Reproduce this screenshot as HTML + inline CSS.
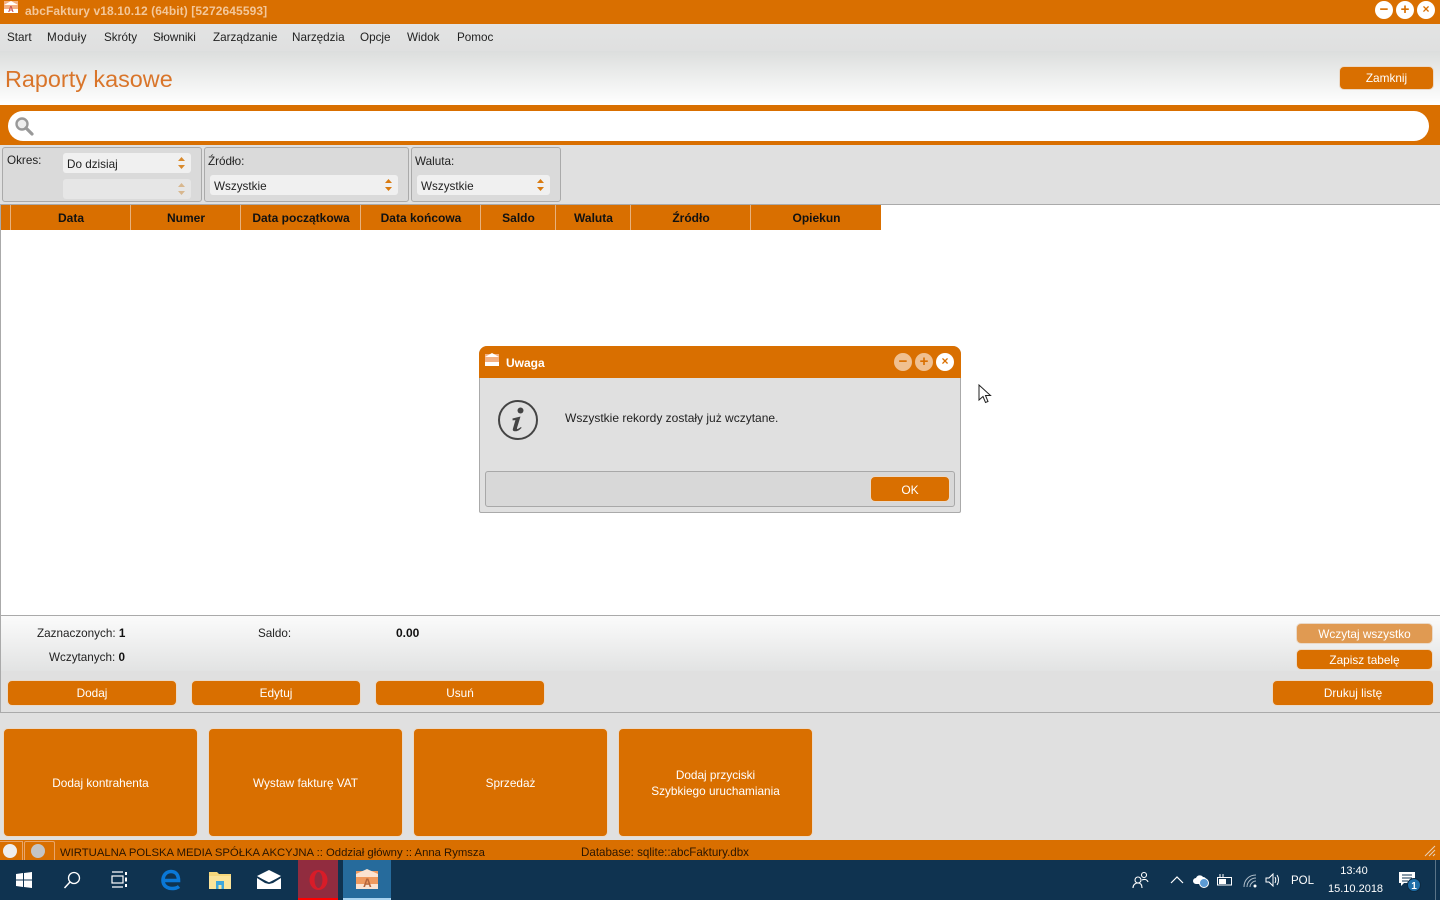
<!DOCTYPE html>
<html lang="pl"><head><meta charset="utf-8"><title>abcFaktury</title>
<style>
*{box-sizing:border-box;margin:0;padding:0}
html,body{width:1440px;height:900px;overflow:hidden;background:#e0e0e0;font-family:"Liberation Sans",sans-serif;font-size:11.7px;color:#222}
.a{position:absolute;white-space:nowrap}
.btn{position:absolute;background:#d96f00;color:#fff;border-radius:5px;border:1px solid #ead9c8;text-align:center;font-size:11.8px;display:flex;align-items:center;justify-content:center;line-height:16px}
.tb{position:absolute;top:0;width:1440px;height:24px;background:#d96f00}
.wc{position:absolute;border-radius:50%;background:#fff;color:#d96f00;text-align:center;font-weight:bold}
.panel{position:absolute;background:#dadada;border:1px solid #aaa;border-radius:3px}
.sel{position:absolute;background:#f0f0f0;border-radius:3px;font-size:11.7px;padding:4px 4px;height:20px;line-height:15px;color:#222}
.ar{position:absolute;right:6px;top:4px;width:7px;height:12px}
.th{position:absolute;top:205px;height:25px;background:#d96f00;border-right:1px solid #e8b27d;font-weight:bold;color:#111;text-align:center;line-height:26px;font-size:12px;padding-left:1px}
</style></head><body>
<div class="tb"></div>
<svg class="a" style="left:3px;top:0" width="16" height="14" viewBox="0 0 16 14"><rect x="1" y="1" width="14" height="12" fill="#f4b183"/><path d="M1 5L8 1l7 4" fill="#fff"/><path d="M1 9h14v4H1z" fill="#fff"/><text x="5" y="12" font-size="8" font-weight="bold" fill="#c55">A</text></svg>
<div class="a" style="left:25px;top:3px;font-weight:bold;color:#f3c79a;font-size:12px;line-height:16px;letter-spacing:.1px">abcFaktury v18.10.12 (64bit) [5272645593]</div>
<div class="wc" style="left:1375px;top:1px;width:18px;height:18px;line-height:17px;font-size:15px">−</div>
<div class="wc" style="left:1396px;top:1px;width:18px;height:18px;line-height:17px;font-size:15px">+</div>
<div class="wc" style="left:1417px;top:1px;width:18px;height:18px;line-height:17px;font-size:12px">×</div>

<div class="a" style="left:0;top:24px;width:1440px;height:27px;background:linear-gradient(#e3e3e3,#dfe0e0)"></div>
<div class="a" style="left:7px;top:30px;line-height:16px">Start</div>
<div class="a" style="left:47px;top:30px;line-height:16px;letter-spacing:.35px">Moduły</div>
<div class="a" style="left:104px;top:30px;line-height:16px">Skróty</div>
<div class="a" style="left:153px;top:30px;line-height:16px">Słowniki</div>
<div class="a" style="left:213px;top:30px;line-height:16px">Zarządzanie</div>
<div class="a" style="left:292px;top:30px;line-height:16px">Narzędzia</div>
<div class="a" style="left:360px;top:30px;line-height:16px">Opcje</div>
<div class="a" style="left:407px;top:30px;line-height:16px">Widok</div>
<div class="a" style="left:457px;top:30px;line-height:16px">Pomoc</div>

<div class="a" style="left:0;top:51px;width:1440px;height:54px;background:linear-gradient(#dcdedd,#fff)"></div>
<div class="a" style="left:5px;top:65px;font-size:23.4px;line-height:28px;color:#d9752a">Raporty kasowe</div>
<div class="btn" style="left:1339px;top:66px;width:95px;height:24px">Zamknij</div>

<div class="a" style="left:0;top:105px;width:1440px;height:40px;background:#d96f00"></div>
<div class="a" style="left:8px;top:111px;width:1421px;height:30px;background:#fff;border-radius:15px"></div>
<svg class="a" style="left:14px;top:116px" width="20" height="20" viewBox="0 0 20 20"><circle cx="8" cy="8" r="5.500" fill="#eee" stroke="#999" stroke-width="2.400"/><path d="M12 12l6 6" stroke="#999" stroke-width="3.200" stroke-linecap="round"/></svg>

<div class="a" style="left:0;top:145px;width:1440px;height:60px;background:#e0e0e0;border-bottom:1px solid #aaa"></div>
<div class="panel" style="left:2px;top:147px;width:200px;height:55px"></div>
<div class="a" style="left:7px;top:153px;line-height:16px">Okres:</div>
<div class="sel" style="left:63px;top:153px;width:128px">Do dzisiaj<svg class="ar" viewBox="0 0 7 12"><path d="M3.500 0L7 4H0zM0 8h7l-3.500 4z" fill="#d98a2c"/></svg></div>
<div class="sel" style="left:63px;top:179px;width:128px;background:#e6e6e6"><svg class="ar" viewBox="0 0 7 12"><path d="M3.500 0L7 4H0zM0 8h7l-3.500 4z" fill="#d8b78e"/></svg></div>
<div class="panel" style="left:204px;top:147px;width:205px;height:55px"></div>
<div class="a" style="left:208px;top:154px;line-height:16px">Źródło:</div>
<div class="sel" style="left:210px;top:175px;width:188px">Wszystkie<svg class="ar" viewBox="0 0 7 12"><path d="M3.500 0L7 4H0zM0 8h7l-3.500 4z" fill="#d97a10"/></svg></div>
<div class="panel" style="left:411px;top:147px;width:150px;height:55px"></div>
<div class="a" style="left:415px;top:154px;line-height:16px">Waluta:</div>
<div class="sel" style="left:417px;top:175px;width:133px">Wszystkie<svg class="ar" viewBox="0 0 7 12"><path d="M3.500 0L7 4H0zM0 8h7l-3.500 4z" fill="#d97a10"/></svg></div>

<div class="a" style="left:0;top:205px;width:1440px;height:411px;background:#fff;border-left:1px solid #aaa;border-bottom:1px solid #aaa"></div>
<div class="th" style="left:1px;width:10px"></div>
<div class="th" style="left:11px;width:120px">Data</div>
<div class="th" style="left:131px;width:110px">Numer</div>
<div class="th" style="left:241px;width:120px">Data początkowa</div>
<div class="th" style="left:361px;width:120px">Data końcowa</div>
<div class="th" style="left:481px;width:75px">Saldo</div>
<div class="th" style="left:556px;width:75px">Waluta</div>
<div class="th" style="left:631px;width:120px">Źródło</div>
<div class="th" style="left:751px;width:130px;border-right:0">Opiekun</div>

<div class="a" style="left:0;top:616px;width:1440px;height:55px;background:linear-gradient(#fbfbfb,#e2e3e3)"></div>
<div class="a" style="left:0;top:671px;width:1440px;height:42px;background:#e0e0e0;border-bottom:1px solid #aaa"></div>
<div class="a" style="left:0;top:616px;width:1px;height:97px;background:#aaa"></div>
<div class="a" style="left:37px;top:626px;line-height:16px">Zaznaczonych: <b style="color:#111">1</b></div>
<div class="a" style="left:49px;top:650px;line-height:16px">Wczytanych: <b style="color:#111">0</b></div>
<div class="a" style="left:258px;top:626px;line-height:16px">Saldo:</div>
<div class="a" style="left:396px;top:625px;line-height:16px;font-weight:bold;font-size:12px;color:#111">0.00</div>
<div class="btn" style="left:1296px;top:623px;width:137px;height:21px;background:#e09a52;color:#fff">Wczytaj wszystko</div>
<div class="btn" style="left:1296px;top:649px;width:137px;height:21px">Zapisz tabelę</div>
<div class="btn" style="left:7px;top:680px;width:170px;height:26px">Dodaj</div>
<div class="btn" style="left:191px;top:680px;width:170px;height:26px">Edytuj</div>
<div class="btn" style="left:375px;top:680px;width:170px;height:26px">Usuń</div>
<div class="btn" style="left:1272px;top:680px;width:162px;height:26px">Drukuj listę</div>

<div class="btn" style="left:3px;top:728px;width:195px;height:109px">Dodaj kontrahenta</div>
<div class="btn" style="left:208px;top:728px;width:195px;height:109px">Wystaw fakturę VAT</div>
<div class="btn" style="left:413px;top:728px;width:195px;height:109px">Sprzedaż</div>
<div class="btn" style="left:618px;top:728px;width:195px;height:109px">Dodaj przyciski<br>Szybkiego uruchamiania</div>

<div class="a" style="left:0;top:840px;width:1440px;height:20px;background:#d96f00"></div>
<div class="a" style="left:0;top:841px;width:23px;height:19px;border-right:1px solid #e8a56a;border-top:1px solid #e8a56a"></div>
<div class="a" style="left:24px;top:841px;width:31px;height:19px;border-right:1px solid #e8a56a;border-top:1px solid #e8a56a;border-left:1px solid #e8a56a;border-radius:2px 2px 0 0"></div>
<div class="a" style="left:3px;top:844px;width:14px;height:14px;border-radius:50%;background:#eee"></div>
<div class="a" style="left:31px;top:844px;width:14px;height:14px;border-radius:50%;background:#c4c4c4"></div>
<div class="a" style="left:60px;top:845px;line-height:16px;font-size:11.3px;color:#2a1500">WIRTUALNA POLSKA MEDIA SPÓŁKA AKCYJNA :: Oddział główny :: Anna Rymsza</div>
<div class="a" style="left:581px;top:845px;line-height:16px;font-size:11.6px;color:#2a1500">Database: sqlite::abcFaktury.dbx</div>
<svg class="a" style="left:1424px;top:845px" width="12" height="12"><path d="M1 11L11 1M5 11l6-6M9 11l2-2" stroke="#e8d3bd"/></svg>

<div class="a" style="left:479px;top:346px;width:482px;height:167px;background:#e0e0e0;border:1px solid #aaa;border-top:0;border-radius:8px 8px 2px 2px"></div>
<div class="a" style="left:479px;top:346px;width:482px;height:32px;background:#d96f00;border-radius:8px 8px 0 0"></div>
<svg class="a" style="left:484px;top:352px" width="16" height="15" viewBox="0 0 16 15"><rect x="1" y="2" width="14" height="12" fill="#f4b183"/><path d="M1 5l7-4 7 4" fill="#fff"/><path d="M1 10h14v4H1z" fill="#fff"/></svg>
<div class="a" style="left:506px;top:355px;font-weight:bold;font-size:12px;color:#fff;line-height:16px">Uwaga</div>
<div class="wc" style="left:894px;top:353px;width:18px;height:18px;background:#f0c090;line-height:17px;font-size:15px">−</div>
<div class="wc" style="left:915px;top:353px;width:18px;height:18px;background:#f0c090;line-height:17px;font-size:15px">+</div>
<div class="wc" style="left:936px;top:353px;width:18px;height:18px;line-height:17px;font-size:12px">×</div>
<svg class="a" style="left:497px;top:399px" width="42" height="42" viewBox="0 0 42 42"><circle cx="21" cy="21" r="19" fill="none" stroke="#444" stroke-width="2"/><circle cx="23.500" cy="11.500" r="3" fill="#444"/><path d="M15.500 19.500l8-2-3.500 11.500c-.3 1 .4 1.300 1.200.8l2.800-1.800.6.9c-2.300 2.300-4 3.400-6.300 3.400-2.200 0-2.800-1-2.400-2.500l2.500-8.700-2.800.3z" fill="#444"/></svg>
<div class="a" style="left:565px;top:410px;line-height:16px;font-size:12px;color:#222">Wszystkie rekordy zostały już wczytane.</div>
<div class="a" style="left:485px;top:471px;width:470px;height:36px;background:#d8d8d8;border:1px solid #a8a8a8;border-radius:3px"></div>
<div class="btn" style="left:870px;top:476px;width:80px;height:26px;font-size:12px;padding-top:1px">OK</div>
<svg class="a" style="left:977px;top:383px" width="15" height="22" viewBox="0 0 15 22"><path d="M2 2v15l4-3.500 2.500 6 2.500-1-2.500-6h5z" fill="#fff" stroke="#222" stroke-width="1"/></svg>

<div class="a" style="left:0;top:860px;width:1440px;height:40px;background:#0f3350"></div>
<svg class="a" style="left:15px;top:871px" width="18" height="18" viewBox="0 0 18 18"><path d="M1 3l7-1v6.500H1zM9 2l8-1v7.500H9zM1 9.500h7V16l-7-1zM9 9.500h8V17l-8-1z" fill="#fff"/></svg>
<svg class="a" style="left:63px;top:871px" width="18" height="18" viewBox="0 0 18 18"><circle cx="11" cy="7" r="5.500" fill="none" stroke="#fff" stroke-width="1.300"/><path d="M7 11l-5.500 6" stroke="#fff" stroke-width="1.500"/></svg>
<svg class="a" style="left:111px;top:871px" width="18" height="18" viewBox="0 0 18 18" fill="none" stroke="#fff" stroke-width="1.200"><path d="M1 1h11M1 16h11"/><rect x="1" y="5" width="11" height="7"/><path d="M15 1v3M15 6.500v4M15 13v3" stroke-width="2"/></svg>
<svg class="a" style="left:161px;top:869px" width="21" height="22" viewBox="0 0 21 22"><path d="M3 11.500h14.500C17.500 6 15 2.500 10 2.500S2 6.500 2 11.500 6 19.500 11 19.500c3 0 5.500-.8 7-2" fill="none" stroke="#0a78d7" stroke-width="3.600"/></svg>
<svg class="a" style="left:209px;top:870px" width="22" height="20" viewBox="0 0 22 20"><path d="M0 2h8l2 2h12v15H0z" fill="#f6d87c"/><rect x="0" y="6" width="22" height="13" fill="#fbe49a"/><rect x="7" y="11" width="8" height="8" fill="#3fa7dc"/><rect x="9.500" y="15" width="3" height="4" fill="#fbe49a"/></svg>
<svg class="a" style="left:257px;top:870px" width="24" height="19" viewBox="0 0 24 19"><path d="M0 6L12 0l12 6-12 7z" fill="#fff"/><path d="M0 8l8 5 4 1 4-1 8-5v11H0z" fill="#fff"/><path d="M0 7l12 6 12-6" fill="none" stroke="#0f3350" stroke-width="1"/></svg>
<div class="a" style="left:298px;top:860px;width:40px;height:40px;background:#912c3f;border-bottom:2px solid #f00"></div>
<svg class="a" style="left:306px;top:868px" width="24" height="24" viewBox="0 0 24 24"><ellipse cx="12.500" cy="12" rx="9" ry="10" fill="#d81c28"/><ellipse cx="12.500" cy="12" rx="4" ry="8" fill="#912c3f"/></svg>
<div class="a" style="left:343px;top:860px;width:48px;height:40px;background:#266b9c;border-bottom:2px solid #a9d3ef"></div>
<svg class="a" style="left:355px;top:868px" width="24" height="22" viewBox="0 0 24 22"><rect x="1" y="3" width="22" height="18" fill="#ef9a5f"/><path d="M1 6l11-5 11 5v3H1z" fill="#fbe3d1"/><path d="M1 16h22v5H1z" fill="#fbe3d1"/><text x="8" y="19" font-size="12" font-weight="bold" fill="#b5653b" font-family="Liberation Sans">A</text></svg>

<svg class="a" style="left:1132px;top:871px" width="18" height="18" viewBox="0 0 18 18" fill="none" stroke="#fff" stroke-width="1.100"><circle cx="6" cy="9" r="3"/><path d="M1 17c0-3 2-5 5-5s4 2 4 5"/><circle cx="12" cy="4" r="2.500"/><path d="M10 9c2-1 5-1 6 2"/></svg>
<svg class="a" style="left:1170px;top:875px" width="14" height="9"><path d="M1 8l6-6 6 6" fill="none" stroke="#fff" stroke-width="1.200"/></svg>
<svg class="a" style="left:1193px;top:873px" width="17" height="15" viewBox="0 0 17 15"><path d="M3 11a3 3 0 010-6 4 4 0 017-1 3 3 0 013 4v3z" fill="#fff"/><circle cx="11" cy="10" r="4.500" fill="#5b9bd5" stroke="#fff"/></svg>
<svg class="a" style="left:1217px;top:874px" width="16" height="12" viewBox="0 0 16 12" fill="none" stroke="#fff"><rect x=".5" y="3.500" width="14" height="7.500"/><rect x="2" y="5" width="7" height="5" fill="#fff" stroke="none"/><path d="M3 0v3M6 0v3"/></svg>
<svg class="a" style="left:1243px;top:874px" width="14" height="14" viewBox="0 0 14 14" fill="none" stroke="#aebdc9"><path d="M1 13C1 6 6 1 13 1M4 13c0-5 4-9 9-9M7 13c0-3 3-6 6-6"/><circle cx="12" cy="12" r="1.500" fill="#fff" stroke="none"/></svg>
<svg class="a" style="left:1265px;top:873px" width="16" height="14" viewBox="0 0 16 14" fill="none" stroke="#fff"><path d="M1 5h3l4-4v12L4 9H1z"/><path d="M10 4c1 2 1 4 0 6M12 2c2 3 2 7 0 10"/></svg>
<div class="a" style="left:1291px;top:873px;color:#fff;font-size:11.5px;line-height:16px">POL</div>
<div class="a" style="left:1328px;top:863px;width:52px;text-align:center;color:#fff;font-size:11px;line-height:16px">13:40</div>
<div class="a" style="left:1328px;top:881px;width:52px;text-align:center;color:#fff;font-size:11px;line-height:16px">15.10.2018</div>
<svg class="a" style="left:1399px;top:872px" width="24" height="20" viewBox="0 0 24 20"><path d="M0 0h16v11H5l-3 3v-3H0z" fill="#fff"/><path d="M3 3h10M3 6h10M3 9h6" stroke="#0f3350"/><circle cx="15" cy="13" r="6.500" fill="#1e6ea8" stroke="#0c2a42"/><text x="15" y="17" font-size="10" font-weight="bold" fill="#fff" text-anchor="middle" font-family="Liberation Sans">1</text></svg>
<div class="a" style="left:1435px;top:860px;width:1px;height:40px;background:#5a7488"></div>
</body></html>
